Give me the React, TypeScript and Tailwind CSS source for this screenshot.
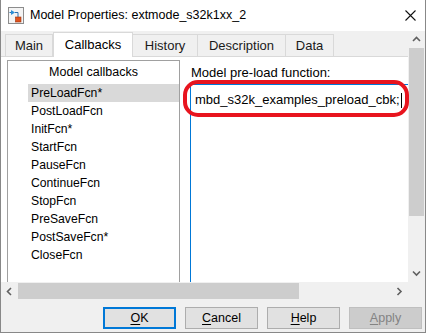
import React from 'react'

const callbacks = [
  'PreLoadFcn*',
  'PostLoadFcn',
  'InitFcn*',
  'StartFcn',
  'PauseFcn',
  'ContinueFcn',
  'StopFcn',
  'PreSaveFcn',
  'PostSaveFcn*',
  'CloseFcn',
]

const tabs = [
  { label: 'Main', w: 'w-[48px]' },
  { label: 'Callbacks', w: 'w-[80px]', active: true },
  { label: 'History', w: 'w-[65px]' },
  { label: 'Description', w: 'w-[88px]' },
  { label: 'Data', w: 'w-[48px]' },
]

// small scrollbar chevron
function Chevron({ dir }: { dir: 'up' | 'down' | 'left' | 'right' }) {
  const d = {
    up: 'M1 5 L4.5 1.5 L8 5',
    down: 'M1 1.5 L4.5 5 L8 1.5',
    left: 'M5 1 L1.5 4.5 L5 8',
    right: 'M1.5 1 L5 4.5 L1.5 8',
  }[dir]
  const vertical = dir === 'up' || dir === 'down'
  return (
    <svg width={vertical ? 9 : 7} height={vertical ? 7 : 9} viewBox={vertical ? '0 0 9 7' : '0 0 7 9'}>
      <path d={d} fill="none" stroke="#606060" strokeWidth="1.6" />
    </svg>
  )
}

function ModelIcon() {
  return (
    <svg width="16" height="17" viewBox="0 0 16 17">
      <rect x="0.5" y="0.5" width="15" height="16" fill="#f4f4f4" stroke="#8c8c8c" />
      <path d="M3 3 L3 8 L7 5.5 Z" fill="#2b8fd6" />
      <path d="M1.5 5.5 H3 M7 5.5 H10 V10" fill="none" stroke="#2b6fb0" strokeWidth="1" />
      <rect x="7.5" y="10" width="5.5" height="5" fill="#e0521c" stroke="#9a3210" strokeWidth="0.6" />
    </svg>
  )
}

function DlgButton({ label, ul, primary, disabled }: { label: string; ul: number; primary?: boolean; disabled?: boolean }) {
  const cls = primary
    ? 'border-2 border-[#0078d7] bg-[#e1e1e1] text-black'
    : disabled
      ? 'border border-[#bfbfbf] bg-[#cccccc] text-[#838383]'
      : 'border border-[#adadad] bg-[#e1e1e1] text-black'
  return (
    <div className={`w-[73px] h-[22px] flex items-center justify-center text-[12.5px] leading-none ${cls}`}>
      <span>
        {label.slice(0, ul)}
        <span className="underline underline-offset-2">{label[ul]}</span>
        {label.slice(ul + 1)}
      </span>
    </div>
  )
}

export default function App() {
  return (
    <div
      className="relative w-[426px] h-[333px] flex flex-col bg-[#f0f0f0] border-l border-r border-b border-[#888888] overflow-hidden text-black"
      style={{ fontFamily: '"Liberation Sans", Arial, sans-serif' }}
    >
      {/* TITLE BAR */}
      <div className="h-[31px] shrink-0 bg-white flex items-center">
        <div className="ml-[7px] mt-[-1px] flex">
          <ModelIcon />
        </div>
        <span className="ml-[6px] text-[12.5px]">Model Properties: extmode_s32k1xx_2</span>
        <div className="ml-auto mr-[9px] flex">
          <svg width="11" height="11" viewBox="0 0 11 11">
            <path d="M0.5 0.5 L10.5 10.5 M10.5 0.5 L0.5 10.5" stroke="#111" strokeWidth="1.1" />
          </svg>
        </div>
      </div>

      {/* SCROLLED CONTENT + SCROLLBARS */}
      <div className="flex h-[269px] shrink-0">
        <div className="flex flex-col w-[407px]">
          <div className="h-[251px] flex flex-col">
            {/* tab strip */}
            <div className="h-[26px] shrink-0 flex items-end pl-[4px] border-b border-[#d9d9d9]">
              {tabs.map(t =>
                t.active ? (
                  <div
                    key={t.label}
                    className={`${t.w} h-[25px] mb-[-1px] bg-white border border-b-0 border-[#d9d9d9] flex items-center justify-center text-[13px]`}
                  >
                    {t.label}
                  </div>
                ) : (
                  <div
                    key={t.label}
                    className={`${t.w} h-[22px] border border-b-0 border-l-0 first:border-l border-[#d9d9d9] flex items-center justify-center text-[13px] text-[#1a1a1a]`}
                  >
                    {t.label}
                  </div>
                ),
              )}
            </div>

            {/* tab panel */}
            <div className="flex-1 bg-white flex pt-[3px] min-h-0">
              {/* list box */}
              <div className="ml-[6px] w-[173px] border border-b-0 border-[#a0a0a0] flex flex-col">
                <div className="h-[23px] shrink-0 flex items-center justify-center text-[12.5px]">Model callbacks</div>
                <div className="flex flex-col">
                  {callbacks.map((c, i) => (
                    <div
                      key={c}
                      className={`ml-[20px] h-[18px] pl-[3px] flex items-center text-[12.2px] ${i === 0 ? 'bg-[#d9d9d9]' : ''}`}
                    >
                      {c}
                    </div>
                  ))}
                </div>
              </div>

              {/* function editor */}
              <div className="ml-[10px] flex-1 flex flex-col min-w-0">
                <div className="h-[16px] mt-[5px] pl-[1px] flex items-center text-[13px]">Model pre-load function:</div>
                <div className="mt-[3px] flex-1 border-l border-t border-[#0078d7] pl-[4px] pt-[7px]">
                  <div className="h-[16px] flex items-center text-[13px] whitespace-nowrap">
                    mbd_s32k_examples_preload_cbk;
                    <span className="inline-block w-px h-[15px] bg-black ml-[1px]" />
                  </div>
                </div>
              </div>
            </div>
          </div>

          {/* horizontal scrollbar */}
          <div className="h-[18px] shrink-0 flex items-center bg-[#f0f0f0]">
            <div className="w-[17px] flex justify-center">
              <Chevron dir="left" />
            </div>
            <div className="w-[281px] h-[16px] bg-[#cdcdcd]" />
            <div className="flex-1 flex justify-end pr-[5px]">
              <Chevron dir="right" />
            </div>
          </div>
        </div>

        {/* vertical scrollbar */}
        <div className="w-[17px] flex flex-col">
          <div className="h-[251px] flex flex-col items-center bg-[#f0f0f0]">
            <div className="h-[17px] flex items-center justify-center">
              <Chevron dir="up" />
            </div>
            <div className="w-[15px] h-[168px] bg-[#cdcdcd]" />
            <div className="flex-1" />
            <div className="h-[17px] flex items-center justify-center">
              <Chevron dir="down" />
            </div>
          </div>
          <div className="flex-1 bg-[#f0f0f0]" />
        </div>
      </div>

      {/* BUTTON ROW */}
      <div className="flex-1 flex justify-end items-start gap-[9px] pt-[7px] pr-[3px]">
        <DlgButton label="OK" ul={0} primary />
        <DlgButton label="Cancel" ul={0} />
        <DlgButton label="Help" ul={0} />
        <DlgButton label="Apply" ul={0} disabled />
      </div>

      {/* annotation highlight around the callback text */}
      <div className="absolute left-[182px] top-[80px] w-[226px] h-[37px] border-[4px] border-[#e8141e] rounded-[15px]" />
    </div>
  )
}
